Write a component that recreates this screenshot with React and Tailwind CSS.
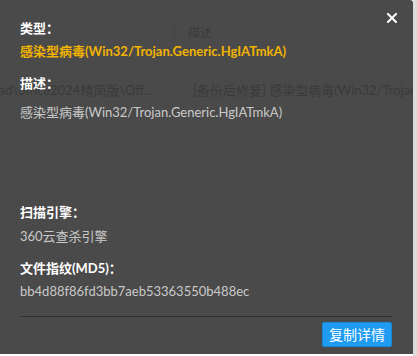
import React from 'react';

const font = { fontFamily: 'Lato, "Noto Sans CJK SC", sans-serif' };

const Label = ({ children, className = '' }) => (
    <div className={`h-5 leading-5 text-[13px] font-bold text-white ${className}`}>{children}</div>
);

const Value = ({ children, className = '' }) => (
    <div className={`h-5 leading-5 text-[13px] text-[#c9c9c9] ${className}`}>{children}</div>
);

export default function App() {
    return (
        <div
            className="relative w-[417px] h-[356px] overflow-hidden bg-white"
            style={font}
        >
            {/* list underneath the dialog */}
            <div className="flex flex-col text-[#111]">
                <div className="flex items-center h-[26px] mt-[20px]">
                    <div className="w-[174px] shrink-0" />
                    <div className="w-px h-[12px] bg-[#888] shrink-0" />
                    <div className="pl-[13px] text-[12px]">描述</div>
                </div>
                <div className="flex items-center h-[20px] mt-[35px] text-[13px] whitespace-nowrap">
                    <div className="w-[153px] shrink-0 flex justify-end overflow-hidden">
                        <span className="shrink-0">D:\Download\office2024精简版\Off...</span>
                    </div>
                    <div className="pl-[40px] shrink-0">[备份后修复] 感染型病毒(Win32/Trojan.Generic.HgIATmkA)</div>
                </div>
            </div>

            {/* right-hand strip */}
            <div className="absolute right-0 top-0 w-[4px] h-full bg-[#dcdcdc]" />

            {/* dialog */}
            <div className="absolute left-0 top-0 w-[413px] h-[354px] rounded-tr-[3px] bg-[rgba(60,60,60,0.93)] pt-[18px] pl-[20px] pr-[21px] flex flex-col">
                <button className="absolute right-[16px] top-[13px] w-[10px] h-[10px] flex items-center justify-center">
                    <svg width="10" height="10" viewBox="0 0 10 10">
                        <path d="M1 1 L9 9 M9 1 L1 9" stroke="#fff" strokeWidth="2" strokeLinecap="square" />
                    </svg>
                </button>

                <Label>类型：</Label>
                <div className="h-5 leading-5 text-[13px] font-bold text-[#f2b300] mt-[3px]">
                    感染型病毒(Win32/Trojan.Generic.HgIATmkA)
                </div>

                <Label className="mt-[12px]">描述：</Label>
                <div className="mt-[9px] h-[88px]">
                    <Value>感染型病毒(Win32/Trojan.Generic.HgIATmkA)</Value>
                </div>

                <Label className="mt-[12px]">扫描引擎：</Label>
                <Value className="mt-[4px]">360云查杀引擎</Value>

                <Label className="mt-[12px]">文件指纹(MD5)：</Label>
                <Value className="mt-[3px]">bb4d88f86fd3bb7aeb53363550b488ec</Value>

                <div className="mt-[15px] h-px bg-[#333]" />

                <div className="flex justify-end mt-[5px]">
                    <button className="w-[70px] h-[25px] rounded-[2px] border border-[#1787d6] bg-[#1f9cf2] text-white text-[14px] leading-[23px]">
                        复制详情
                    </button>
                </div>
            </div>
        </div>
    );
}
